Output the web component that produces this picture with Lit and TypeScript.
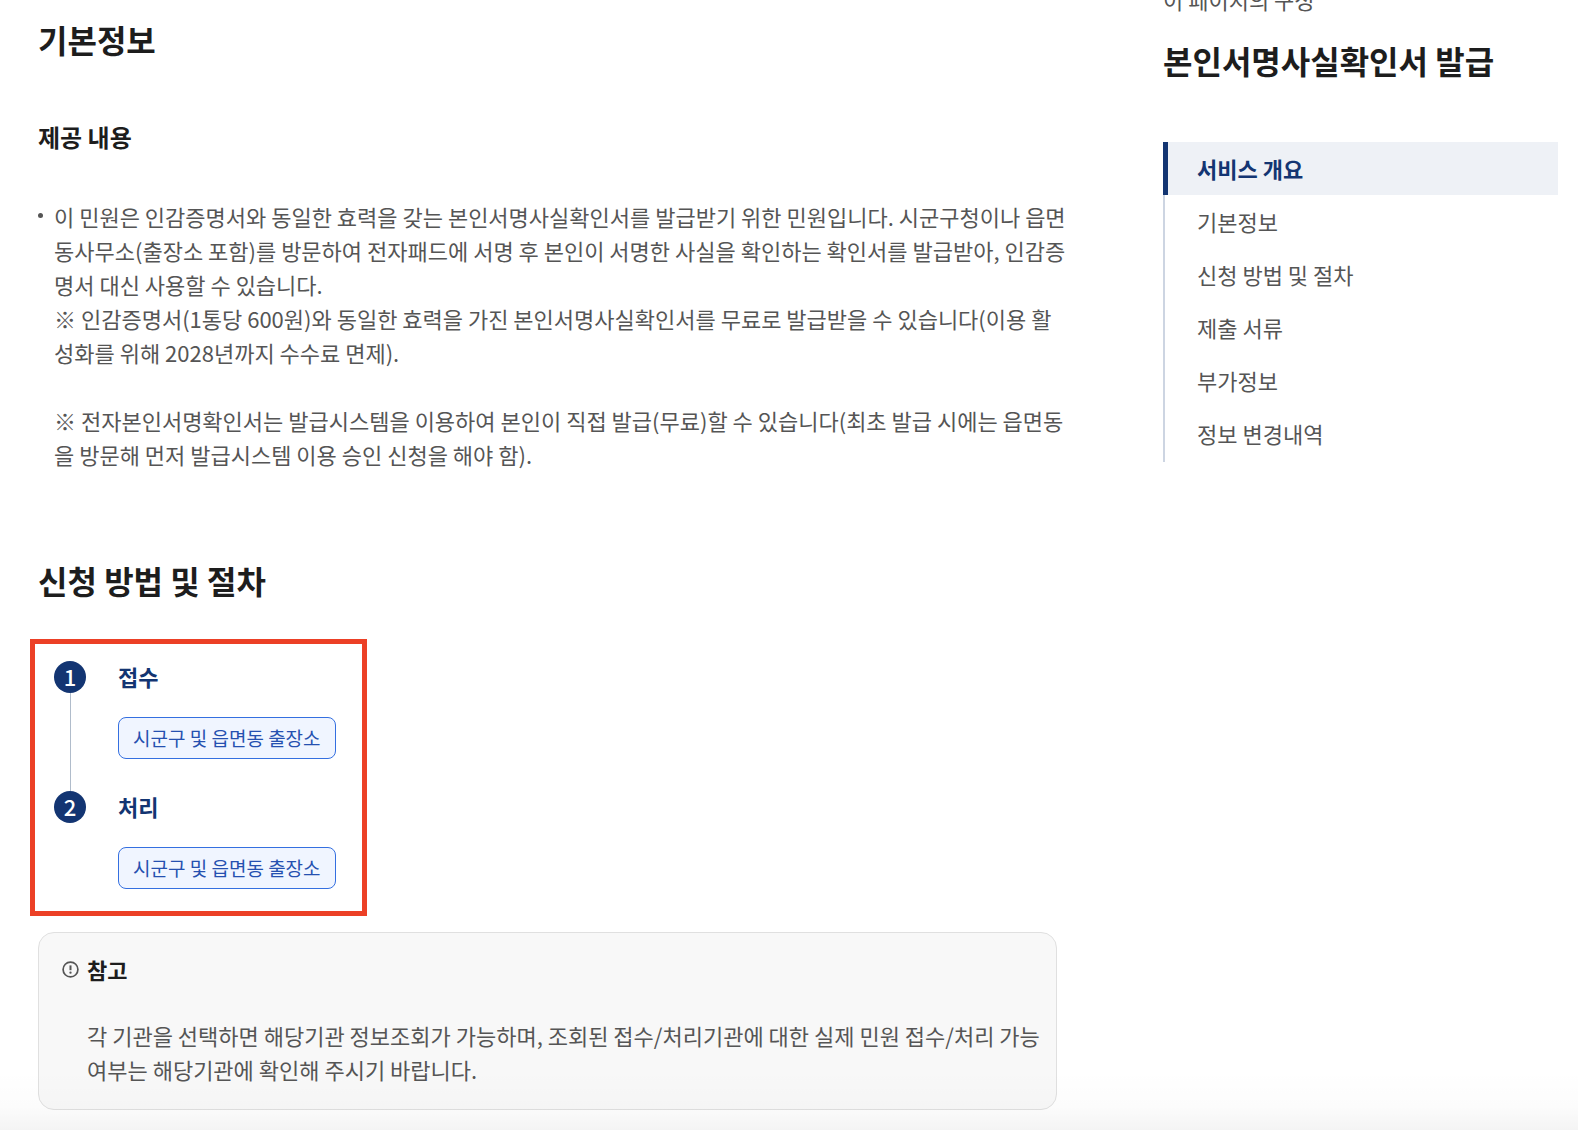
import { LitElement, html, css } from "lit";
import { customElement, property } from "lit/decorators.js";
import { classMap } from "lit/directives/class-map.js";

const INTRO_LINES = [
  "이 민원은 인감증명서와 동일한 효력을 갖는 본인서명사실확인서를 발급받기 위한 민원입니다. 시군구청이나 읍면",
  "동사무소(출장소 포함)를 방문하여 전자패드에 서명 후 본인이 서명한 사실을 확인하는 확인서를 발급받아, 인감증",
  "명서 대신 사용할 수 있습니다.",
  "※ 인감증명서(1통당 600원)와 동일한 효력을 가진 본인서명사실확인서를 무료로 발급받을 수 있습니다(이용 활",
  "성화를 위해 2028년까지 수수료 면제).",
];

const EXTRA_LINES = [
  "※ 전자본인서명확인서는 발급시스템을 이용하여 본인이 직접 발급(무료)할 수 있습니다(최초 발급 시에는 읍면동",
  "을 방문해 먼저 발급시스템 이용 승인 신청을 해야 함).",
];

const NOTE_LINES = [
  "각 기관을 선택하면 해당기관 정보조회가 가능하며, 조회된 접수/처리기관에 대한 실제 민원 접수/처리 가능",
  "여부는 해당기관에 확인해 주시기 바랍니다.",
];

const STEPS = [
  { title: "접수", agency: "시군구 및 읍면동 출장소" },
  { title: "처리", agency: "시군구 및 읍면동 출장소" },
];

const SECTIONS = [
  { id: "overview", label: "서비스 개요" },
  { id: "basic", label: "기본정보" },
  { id: "procedure", label: "신청 방법 및 절차" },
  { id: "documents", label: "제출 서류" },
  { id: "extra", label: "부가정보" },
  { id: "history", label: "정보 변경내역" },
];

const lines = (items: string[]) =>
  items.map((line) => html`<span class="line">${line} </span>`);

@customElement("step-list")
class StepList extends LitElement {
  static styles = css`
    :host {
      display: block;
    }
    .steps {
      list-style: none;
      margin: 0;
      padding: 0;
    }
    .step {
      display: grid;
      grid-template-columns: 32px auto;
      column-gap: 32px;
    }
    .marker {
      display: flex;
      flex-direction: column;
      align-items: center;
    }
    .number {
      width: 32px;
      height: 32px;
      border-radius: 50%;
      background: #133572;
      color: #fff;
      font-size: 22px;
      font-weight: 500;
      line-height: 30px;
      text-align: center;
    }
    .connector {
      flex: 1;
      width: 1px;
      background: #b0bccb;
    }
    .body {
      padding-bottom: 32px;
    }
    .step:last-child .body {
      padding-bottom: 0;
    }
    .title {
      margin: 0 0 26px;
      color: #133572;
      font-size: 22px;
      font-weight: 700;
      line-height: 30px;
    }
    .agency {
      display: block;
      box-sizing: border-box;
      height: 42px;
      padding: 0 14px;
      border: 1px solid #346fe0;
      border-radius: 8px;
      background: #f0f5ff;
      color: #2550b0;
      font: inherit;
      font-size: 19px;
      white-space: nowrap;
      cursor: pointer;
    }
  `;

  render() {
    return html`
      <ol class="steps">
        ${STEPS.map(
          (step, i) => html`
            <li class="step">
              <div class="marker">
                <span class="number">${i + 1}</span>
                ${i < STEPS.length - 1 ? html`<span class="connector"></span>` : null}
              </div>
              <div class="body">
                <h3 class="title">${step.title}</h3>
                <button class="agency" type="button">${step.agency}</button>
              </div>
            </li>
          `
        )}
      </ol>
    `;
  }
}

@customElement("page-outline")
class PageOutline extends LitElement {
  @property() current = "overview";

  static styles = css`
    :host {
      display: block;
    }
    .caption {
      margin: 0;
      color: #555;
      font-size: 22px;
      line-height: 34px;
    }
    .heading {
      margin: 20px 0 58px;
      color: #1d1d1d;
      font-size: 32px;
      font-weight: 700;
      line-height: 48px;
      white-space: nowrap;
    }
    .list {
      list-style: none;
      margin: 0;
      padding: 0 0 2px;
      background: linear-gradient(#cdd5e2, #cdd5e2) left / 2px 100% no-repeat;
    }
    .link {
      display: block;
      padding: 0 34px;
      color: #555;
      font-size: 22px;
      line-height: 53px;
      text-decoration: none;
    }
    .link.active {
      padding-left: 29px;
      border-left: 5px solid #133572;
      background: #eef1f6;
      color: #133572;
      font-weight: 700;
    }
  `;

  private select(id: string, event: Event) {
    event.preventDefault();
    this.current = id;
  }

  render() {
    return html`
      <p class="caption">이 페이지의 구성</p>
      <h2 class="heading">본인서명사실확인서 발급</h2>
      <nav aria-label="이 페이지의 구성">
        <ul class="list">
          ${SECTIONS.map(
            (s) => html`<li>
              <a
                class=${classMap({ link: true, active: s.id === this.current })}
                href="#${s.id}"
                @click=${(e: Event) => this.select(s.id, e)}
                >${s.label}</a
              >
            </li>`
          )}
        </ul>
      </nav>
    `;
  }
}

@customElement("app-root")
class AppRoot extends LitElement {
  static styles = css`
    :host {
      display: block;
      position: relative;
      box-sizing: border-box;
      min-height: 100vh;
      overflow: hidden;
      background: #fff;
      color: #555;
      font-family: "Noto Sans CJK KR", "Noto Sans", sans-serif;
      font-size: 22px;
      line-height: 34px;
    }
    .page {
      display: grid;
      grid-template-columns: minmax(0, 1fr) 395px;
      column-gap: 106px;
      padding: 0 20px 20px 38px;
    }
    .content {
      padding-top: 15px;
    }
    .outline {
      margin-top: -18px;
    }
    .section-title {
      margin: 0;
      color: #1d1d1d;
      font-size: 32px;
      font-weight: 700;
      line-height: 48px;
    }
    .sub-title {
      margin: 56px 0 44px;
      color: #1d1d1d;
      font-size: 24px;
      font-weight: 700;
      line-height: 36px;
    }
    .bullets {
      list-style: none;
      margin: 0 0 85px;
      padding: 0;
    }
    .bullet {
      display: grid;
      grid-template-columns: 5px minmax(0, 1fr);
      column-gap: 11px;
    }
    .dot {
      width: 5px;
      height: 5px;
      margin-top: 14px;
      border-radius: 50%;
      background: #555;
    }
    .paragraph {
      margin: 0 0 34px;
    }
    .paragraph:last-child {
      margin-bottom: 0;
    }
    .line {
      display: block;
      white-space: nowrap;
    }
    .highlight {
      box-sizing: border-box;
      width: fit-content;
      margin: 35px 0 16px -8px;
      padding: 17px 26px 22px 19px;
      border: 5px solid #ec4026;
    }
    .note {
      display: grid;
      grid-template-columns: 17px minmax(0, 1fr);
      column-gap: 8px;
      padding: 19px 23px 23px;
      border: 1px solid #e0e0e0;
      border-radius: 16px;
      background: #f8f8f8;
    }
    .note-icon {
      width: 17px;
      height: 17px;
      margin-top: 9px;
    }
    .note-title {
      margin: 0 0 32px;
      color: #1d1d1d;
      font-size: 22px;
      font-weight: 700;
      line-height: 34px;
    }
    .note-text {
      margin: 0;
    }
    .fade {
      position: absolute;
      right: 0;
      bottom: 0;
      left: 0;
      height: 60px;
      background: linear-gradient(
        rgba(0, 0, 0, 0),
        rgba(0, 0, 0, 0.012) 60%,
        rgba(0, 0, 0, 0.045)
      );
      pointer-events: none;
    }
  `;

  render() {
    return html`
      <div class="page">
        <main class="content">
          <section>
            <h2 class="section-title">기본정보</h2>
            <h3 class="sub-title">제공 내용</h3>
            <ul class="bullets">
              <li class="bullet">
                <span class="dot"></span>
                <div>
                  <p class="paragraph">${lines(INTRO_LINES)}</p>
                  <p class="paragraph">${lines(EXTRA_LINES)}</p>
                </div>
              </li>
            </ul>
          </section>
          <section>
            <h2 class="section-title">신청 방법 및 절차</h2>
            <div class="highlight"><step-list></step-list></div>
            <div class="note">
              <svg class="note-icon" viewBox="0 0 17 17" fill="none" aria-hidden="true">
                <circle cx="8.5" cy="8.5" r="7.4" stroke="#555" stroke-width="1.7" />
                <path d="M8.5 4.4v4.8" stroke="#555" stroke-width="2" />
                <circle cx="8.5" cy="11.7" r="1.15" fill="#555" />
              </svg>
              <div>
                <h3 class="note-title">참고</h3>
                <p class="note-text">${lines(NOTE_LINES)}</p>
              </div>
            </div>
          </section>
        </main>
        <aside class="outline"><page-outline></page-outline></aside>
      </div>
      <div class="fade"></div>
    `;
  }
}
